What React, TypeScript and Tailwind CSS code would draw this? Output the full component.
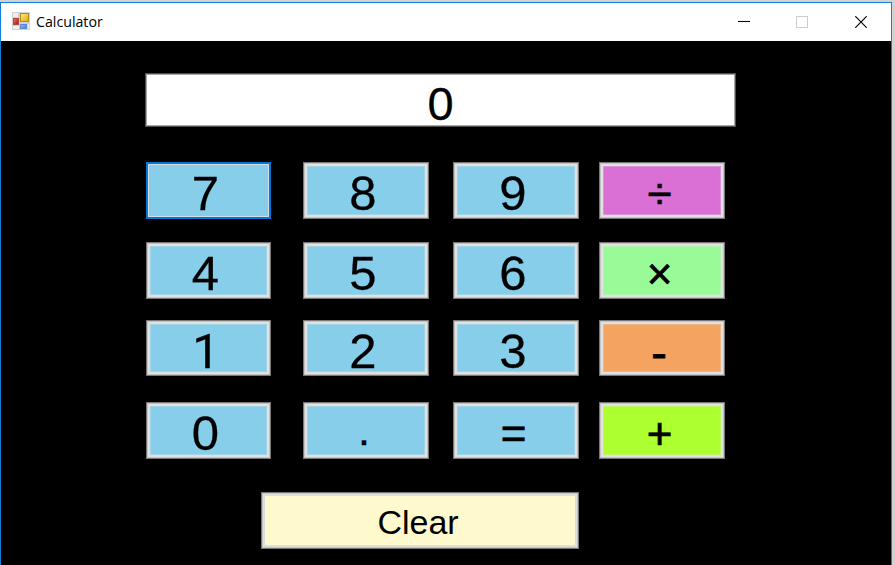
import React from "react";

type Key = { label: string; color?: string; focused?: boolean; size?: string; text?: string };

const symbol = "text-[44px] [-webkit-text-stroke:0.7px_black]";

const rows: { className: string; height: string; keys: Key[] }[] = [
  {
    className: "mt-[34px]",
    height: "h-[57px]",
    keys: [
      { label: "7", focused: true, size: "w-[125px]" },
      { label: "8" },
      { label: "9" },
      { label: "÷", color: "bg-[#da70d6]", text: `pr-[5px] pt-[5px] ${symbol}` },
    ],
  },
  {
    className: "mt-[23px]",
    height: "h-[57px]",
    keys: [
      { label: "4", size: "w-[125px]" },
      { label: "5" },
      { label: "6" },
      { label: "×", color: "bg-[#98fb98]", text: `pr-[5px] pt-[5px] ${symbol}` },
    ],
  },
  {
    className: "mt-[21px]",
    height: "h-[56px]",
    keys: [
      {
        label: "1",
        size: "w-[125px]",
        text: "font-['Roboto',sans-serif] pr-[5px] pt-[6px] text-[49px] [-webkit-text-stroke:0.3px_black]",
      },
      { label: "2" },
      { label: "3" },
      { label: "-", color: "bg-[#f4a460]", text: "pr-[6px] pt-[9px] text-[47px] [-webkit-text-stroke:0.8px_black]" },
    ],
  },
  {
    className: "mt-[26px]",
    height: "h-[57px]",
    keys: [
      { label: "0", size: "w-[125px]" },
      { label: ".", text: "pr-[4px] pb-[1px] text-[43px] [-webkit-text-stroke:0.3px_black]" },
      { label: "=", text: `pr-[5px] pt-[5px] ${symbol}` },
      { label: "+", color: "bg-[#adff2f]", text: `pr-[5px] pt-[5px] ${symbol}` },
    ],
  },
];

function CalcKey({
  label,
  color = "bg-[#87ceeb]",
  focused = false,
  size = "w-[126px]",
  text = "pr-[6px] pt-[6px] text-[49px] [-webkit-text-stroke:0.3px_black]",
}: Key) {
  return (
    <button
      className={`flex h-full border ${size} ${
        focused
          ? "border-[#0078d7] bg-[#0078d7] p-px"
          : "border-[#777777] bg-[#e1e1e1] p-[3px] shadow-[inset_0_0_0_1px_#c4c4c4]"
      }`}
    >
      <span
        className={`flex h-full w-full items-center justify-center leading-[43px] text-black ${color} ${text} ${
          focused ? "border border-[#d5dde3]" : "shadow-[inset_0_0_0_1px_rgba(225,225,225,0.3)]"
        }`}
      >
        {label}
      </span>
    </button>
  );
}

function FormIcon() {
  return (
    <svg width="18" height="18" viewBox="0 0 18 18" className="mb-[2px] shrink-0">
      <defs>
        <linearGradient id="gold" x1="0" y1="0" x2="1" y2="1">
          <stop offset="0" stopColor="#ffeb96" />
          <stop offset="1" stopColor="#e5a800" />
        </linearGradient>
        <linearGradient id="red" x1="0" y1="0" x2="1" y2="1">
          <stop offset="0" stopColor="#e47a70" />
          <stop offset="1" stopColor="#a91008" />
        </linearGradient>
        <linearGradient id="blue" x1="0" y1="0" x2="1" y2="1">
          <stop offset="0" stopColor="#9cc4ff" />
          <stop offset="1" stopColor="#3973d0" />
        </linearGradient>
      </defs>
      <rect width="18" height="18" fill="#d2d2d2" />
      <path d="M1 1h5v4H1zM1 14h6v3H1zM16 12h1v5h-1z" fill="#efefef" />
      <rect x="8.5" y="1.5" width="8" height="8" fill="url(#gold)" stroke="#b98a13" />
      <rect x="1.5" y="6.5" width="5" height="6" fill="url(#red)" stroke="#b34740" />
      <rect x="8.5" y="12.5" width="6" height="4" fill="url(#blue)" stroke="#5b8ad6" />
    </svg>
  );
}

export default function App() {
  return (
    <div className="h-[565px] w-[895px] overflow-hidden bg-[#d2d2d2] pt-[2px] font-['Liberation_Sans',Arial,sans-serif]">
      <div className="flex h-[563px] w-[892px] flex-col border-x border-t border-[#0f80dc] bg-black">
        <header className="flex h-[38px] shrink-0 items-center bg-white pl-[11px]">
          <FormIcon />
          <h1 className="ml-[6px] font-['Open_Sans','Noto_Sans',sans-serif] text-[14.2px] leading-[20px] text-black">
            Calculator
          </h1>
          <div className="ml-auto flex items-center pr-[24px]">
            <svg width="12" height="12" viewBox="0 0 12 12" shapeRendering="crispEdges">
              <path d="M0 5h12v1H0z" fill="#000" />
            </svg>
            <svg width="12" height="12" viewBox="0 0 12 12" className="ml-[46px]" shapeRendering="crispEdges">
              <rect x=".5" y=".5" width="11" height="11" fill="none" stroke="#cccccc" />
            </svg>
            <svg width="12" height="12" viewBox="0 0 12 12" className="ml-[47px]">
              <path d="M.3.3l11.4 11.4M11.7.3L.3 11.7" stroke="#000" strokeWidth="1.2" />
            </svg>
          </div>
        </header>

        <main className="flex flex-col pl-[144px] pt-[32px]">
          <div className="flex h-[54px] w-[591px] items-center justify-center border border-[#4c4c4c] bg-white pt-[7px] text-[47px] leading-[47px] text-black shadow-[inset_0_0_0_1px_#a8a8a8] [-webkit-text-stroke:0.3px_black]">
            0
          </div>
          <div className="flex flex-col pt-px">
            {rows.map((row) => (
              <div key={row.keys[0].label} className={`flex pl-px ${row.height} ${row.className}`}>
                <CalcKey {...row.keys[0]} />
                <div className="w-[32px]" />
                <CalcKey {...row.keys[1]} />
                <div className="w-[24px]" />
                <CalcKey {...row.keys[2]} />
                <div className="w-[20px]" />
                <CalcKey {...row.keys[3]} />
              </div>
            ))}
          </div>
          <button className="ml-[116px] mt-[33px] flex h-[57px] w-[318px] border border-[#777777] bg-[#dedede] p-[3px] shadow-[inset_0_0_0_1px_#c4c4c4]">
            <span className="flex h-full w-full items-center justify-center bg-[#fffacd] pr-[4px] pt-[3px] text-[34px] leading-[38px] text-black">
              Clear
            </span>
          </button>
        </main>
      </div>
    </div>
  );
}
